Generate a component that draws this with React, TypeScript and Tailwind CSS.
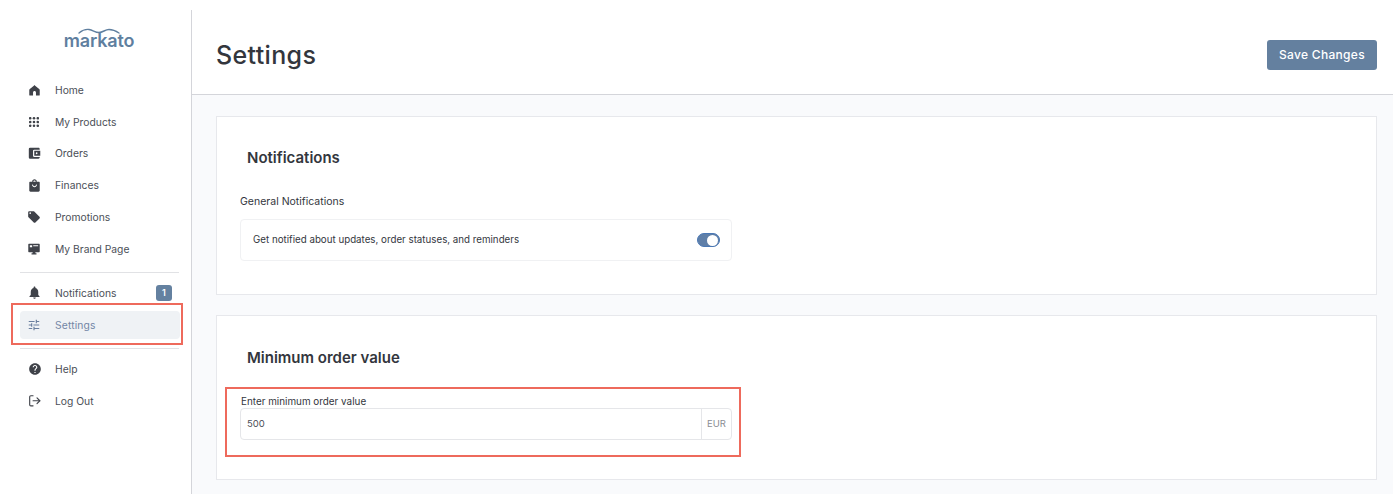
import React from "react";
import { MdAccountBalanceWallet, MdLocalOffer, MdNotifications, MdTune, MdHelp } from "react-icons/md";
import { LogOut } from "lucide-react";

const font = { fontFamily: "Inter, sans-serif" };

function Home({ className }: { className?: string }) {
  return (
    <svg viewBox="0 0 12 12" className={className} fill="currentColor">
      <path d="M6 .4c.3 0 .5.1.7.3l4.400 3.600c.4.300.6.700.6 1.200v5.300c0 .4-.3.700-.7.700H7.600V8.200c0-.9-.7-1.600-1.600-1.600s-1.600.7-1.600 1.600v3.300H1c-.4 0-.7-.3-.7-.7V5.500c0-.5.2-.9.600-1.200L5.300.7C5.500.5 5.700.4 6 .4z" />
    </svg>
  );
}

function Dots({ className }: { className?: string }) {
  const c = [1.5, 6, 10.5];
  return (
    <svg viewBox="0 0 12 12" className={className} fill="currentColor">
      {c.map((y) => c.map((x) => <circle key={`${x}-${y}`} cx={x} cy={y} r="1.55" />))}
    </svg>
  );
}

function Bag({ className }: { className?: string }) {
  return (
    <svg viewBox="0 0 12 14" className={className} fill="currentColor">
      <path d="M3.5 3V2.800C3.5 1.300 4.600.3 6 .3s2.500 1 2.500 2.500V3H11c.4 0 .7.3.7.7v8.800c0 .8-.6 1.300-1.300 1.300H1.600c-.7 0-1.300-.5-1.300-1.300V3.700c0-.4.3-.7.7-.7h2.500zm1.200 0h2.600v-.2c0-.8-.6-1.300-1.300-1.300s-1.300.5-1.300 1.300V3zM3.200 6.200c.4 1.600 1.500 2.600 2.800 2.600s2.400-1 2.800-2.600l-1-.3C7.500 7 6.900 7.700 6 7.700S4.500 7 4.200 5.900l-1 .3z" fillRule="evenodd" />
    </svg>
  );
}

function Monitor({ className }: { className?: string }) {
  return (
    <svg viewBox="0 0 13 13" className={className} fill="currentColor">
      <path fillRule="evenodd" d="M1 .8h11c.4 0 .7.3.7.7v7.800c0 .4-.3.7-.7.7H8v1.200h1.200v1.200H3.800v-1.200H5V10H1c-.4 0-.7-.3-.7-.7V1.500c0-.4.3-.7.7-.7zM2 2.500v2h2.500v-2H2zm3.700 0v1h5.300v-1H5.700z" />
    </svg>
  );
}

function Item({ icon, label, active, badge }: { icon: React.ReactNode; label: string; active?: boolean; badge?: string }) {
  return (
    <div className={`flex h-[28px] items-center rounded-[4px] pl-[7px] pr-2 ${active ? "bg-[#eff2f5] text-[#7286a5]" : "text-[#4b4f57]"}`}>
      <span className={`flex w-[28px] shrink-0 items-center ${active ? "text-[#6a7f9f]" : "text-[#3f4249]"}`}>{icon}</span>
      <span className={`text-[10.3px] leading-none ${active ? "tracking-[0.15px]" : ""}`}>{label}</span>
      {badge && (
        <span className="ml-auto flex h-[16px] w-[16px] items-center justify-center rounded-[3px] bg-[#6481a0] text-[9px] font-semibold text-white">{badge}</span>
      )}
    </div>
  );
}

function Card({ title, children, className, top }: { title: string; children: React.ReactNode; className: string; top: string }) {
  return (
    <section className={`border border-[#e7e8ec] bg-white pr-[644px] pl-[23px] ${className}`}>
      <h2 className={`ml-[7px] text-[15px] leading-[20px] font-semibold text-[#33363d] ${top}`}>{title}</h2>
      {children}
    </section>
  );
}

export default function App() {
  return (
    <div style={font} className="relative h-[498px] w-[1396px] overflow-hidden bg-white pt-[10px]">
      <div className="flex h-[484px] w-[1393px]">
        <aside className="w-[192px] shrink-0 border-r border-[#d4d5da] bg-white">
          <div className="flex h-[66px] items-start justify-center pt-[18px] pl-[7px]">
            <div className="flex flex-col items-center text-[#5f7f9f]">
              <svg viewBox="0 0 42 6" className="h-[6px] w-[42px]" fill="none" stroke="currentColor" strokeWidth="1.4">
                <path d="M1 5C4 2.500 7 1 11 1.500S17 4.500 21 4.500 27 1.500 31 1.500 38 3 41 5" strokeLinecap="round" />
              </svg>
              <span className="-mt-[1px] text-[18px] leading-[15px] font-semibold tracking-[-0.2px]">markato</span>
            </div>
          </div>
          <nav className="flex flex-col gap-[3.8px] pr-[11px] pl-[20px]">
            <Item icon={<Home className="ml-[2px] h-[11px] w-[11px]" />} label="Home" />
            <Item icon={<Dots className="ml-[2px] h-[10px] w-[10px]" />} label="My Products" />
            <Item icon={<MdAccountBalanceWallet className="h-[14.500px] w-[14.500px]" />} label="Orders" />
            <Item icon={<Bag className="ml-[2px] h-[13px] w-[11px]" />} label="Finances" />
            <Item icon={<MdLocalOffer className="h-[14px] w-[14px]" />} label="Promotions" />
            <Item icon={<Monitor className="ml-[1px] h-[12px] w-[12px]" />} label="My Brand Page" />
          </nav>
          <div className="mt-[9px] mr-[12px] ml-[20px] border-t border-[#e1e2e5]" />
          <nav className="mt-[6px] flex flex-col gap-[4px] pr-[11px] pl-[20px]">
            <Item icon={<MdNotifications className="h-[15px] w-[15px]" />} label="Notifications" badge="1" />
            <Item icon={<MdTune className="h-[14px] w-[14px]" />} label="Settings" active />
          </nav>
          <div className="mt-[9px] mr-[12px] ml-[20px] border-t border-[#e1e2e5]" />
          <nav className="mt-[6px] flex flex-col gap-[4px] pr-[11px] pl-[20px]">
            <Item icon={<MdHelp className="ml-[0.5px] h-[14px] w-[14px]" />} label="Help" />
            <Item icon={<LogOut className="ml-[1px] h-[13.500px] w-[13.500px]" strokeWidth={2} />} label="Log Out" />
          </nav>
        </aside>
        <main className="flex min-w-0 flex-1 flex-col bg-[#f9fafc]">
          <header className="flex h-[85px] shrink-0 items-center justify-between border-b border-[#d4d5da] bg-white pt-[6px] pr-[16px] pl-[24px]">
            <h1 className="text-[25px] leading-[32px] font-medium tracking-[0.35px] text-[#33363d]">Settings</h1>
            <button className="h-[30px] w-[110px] rounded-[3px] bg-[#64809f] text-[12px] font-medium tracking-[0.3px] text-white">Save Changes</button>
          </header>
          <div className="flex flex-col gap-[20px] pt-[21px] pr-[16px] pl-[24px]">
            <Card title="Notifications" className="h-[179px]" top="pt-[31px]">
              <p className="mt-[27px] text-[10.500px] leading-[14px] text-[#33363d]">General Notifications</p>
              <div className="mt-[10px] flex h-[42px] items-center justify-between rounded-[4px] border border-[#f0f1f3] pr-[11px] pl-[12px]">
                <span className="text-[9.750px] text-[#33363d]">Get notified about updates, order statuses, and reminders</span>
                <span className="flex h-[14px] w-[23px] items-center justify-end rounded-full border border-[#4a78b5] bg-[#5f7fa8] pr-[1px]">
                  <span className="h-[11px] w-[11px] rounded-full bg-white" />
                </span>
              </div>
            </Card>
            <Card title="Minimum order value" className="h-[165px]" top="pt-[32px]">
              <p className="mt-[26px] ml-[1px] text-[9.900px] leading-[14px] text-[#33363d]">Enter minimum order value</p>
              <div className="flex h-[32px] items-stretch rounded-[4px] border border-[#e5e6e9]">
                <span className="flex flex-1 items-center pl-[6px] text-[9.500px] text-[#4b4f57]">500</span>
                <span className="flex w-[30px] items-center justify-center border-l border-[#e5e6e9] text-[9.500px] text-[#8a8d93]">EUR</span>
              </div>
            </Card>
          </div>
        </main>
      </div>
      <div className="absolute top-[303px] left-[11px] h-[42px] w-[172px] border-2 border-[#ee6a5c]" />
      <div className="absolute top-[387px] left-[225px] h-[70px] w-[516px] border-2 border-[#ee6a5c]" />
    </div>
  );
}
